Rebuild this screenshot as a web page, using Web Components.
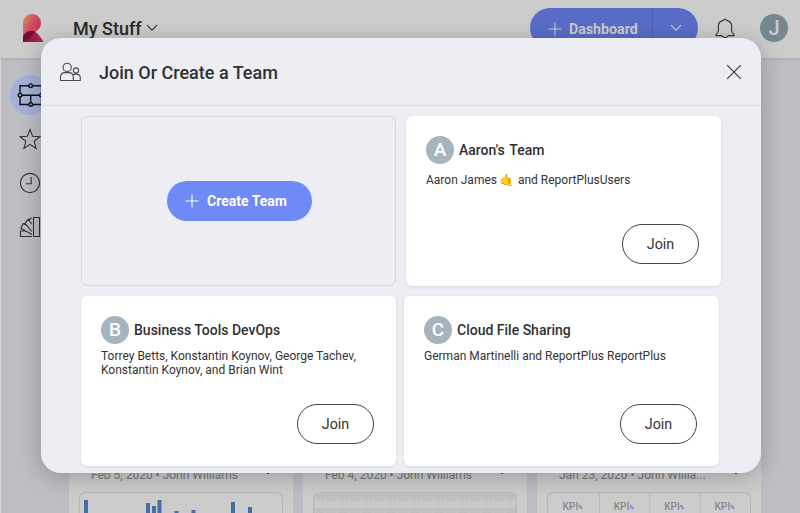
<!DOCTYPE html>
<html lang="en">
<head>
<meta charset="utf-8">
<title>Join Or Create a Team</title>
<style>
html,body{margin:0;padding:0;width:800px;height:513px;overflow:hidden}
body{font-family:Roboto,"Liberation Sans",sans-serif;color:#2f3033;position:relative;background:#bdbec4}
</style>
</head>
<body>
<team-app></team-app>
<script>
const define=(name,html)=>customElements.define(name,class extends HTMLElement{
  connectedCallback(){
    if(this.shadowRoot)return;
    const t=document.createElement('template');
    t.innerHTML=typeof html==='function'?html(this):html;
    this.attachShadow({mode:'open'}).append(t.content.cloneNode(true));
  }
});

const icons={
  plus:['0 0 14 14','<path d="M7 .5v13M.5 7h13"/>'],
  chevron:['0 0 12 8','<path d="M1 1.2 6 6.2 11 1.2"/>'],
  close:['0 0 16 16','<path d="M1.2 1.2 14.8 14.8M14.8 1.2 1.2 14.8"/>'],
  bell:['0 0 20 21','<path d="M10 1c.8 0 1.2.5 1.2 1.100C14.300 2.800 16.600 5 16.600 8v4.800c0 1.500.8 2.200 2.300 3.500v1.300h-5.200c-1.100 0-1.300 1.900-3.700 1.900s-2.600-1.900-3.700-1.900H1.100v-1.300c1.500-1.300 2.300-2 2.300-3.500V8c0-3 2.300-5.200 5.400-5.900C8.800 1.500 9.200 1 10 1Z"/>'],
  people:['0 0 22 20','<circle cx="8.200" cy="5.400" r="4.100"/><path d="M1.500 18.500v-3.300c0-2.700 1.900-4.600 4.600-4.600h3.600c2.700 0 4.600 1.900 4.600 4.600v3.300Z"/><circle cx="17" cy="8.500" r="2.600"/><path d="M14 13.200c.8-.9 1.600-1.100 3-1.100 2.600 0 4.300 1.500 4.300 3.800v2.600h-7"/>'],
  board:['0 0 26 24','<path d="M3 2.700h21.500V21.500H3ZM3 12.200h21.500M13.700 12.200v9.300" stroke-width="1.400"/><g fill="#a2b1d6" stroke-width="1.400"><circle cx="13.700" cy="2.700" r="1.800"/><circle cx="3" cy="12.200" r="1.800"/><circle cx="24.500" cy="12.200" r="1.800"/><circle cx="13.700" cy="21.500" r="1.800"/></g>'],
  star:['0 0 22 22','<path d="m11 1.500 2.600 6.800 7.300.4-5.700 4.600 1.900 7.100L11 16.400l-6.100 4 1.900-7.100L1.100 8.700l7.300-.4Z"/>'],
  clock:['0 0 22 22','<circle cx="11" cy="11" r="9.600"/><path d="M12.200 5v6.800H7"/>'],
  swatch:['0 0 22 22','<path d="M14.500 1.500h6v19h-6ZM13 20.500H1.500v-5.500h5.500M13 18.600 1.700 12.200 4.200 7.500 9.500 10.500M12.800 15.500 6 7.300 9.200 3.200l3.600 5M10 3.500l2.800-1.500"/>']
};
define('ui-icon',e=>{
  const [box,body]=icons[e.getAttribute('name')];
  return `<style>:host{display:block;flex:none}svg{display:block;width:100%;height:100%;overflow:visible}</style>
  <svg viewBox="${box}" fill="none" stroke="currentColor" stroke-width="${e.getAttribute('weight')||1.1}">${body}</svg>`;
});

define('letter-avatar',`<style>:host{display:flex;flex:none;align-items:center;justify-content:center;width:28px;height:28px;border-radius:50%;background:#a6b4bd;color:#fff;font-size:19px;font-weight:500;line-height:28px}</style><slot></slot>`);

define('pill-button',`<style>
:host{display:flex;align-items:center;justify-content:center;box-sizing:border-box;height:40px;border-radius:20px;font-size:14px;line-height:20px}
:host([kind=primary]){background:#6f89f7;color:#fff;font-weight:700;width:145px;padding-right:7px}
:host([kind=outline]){background:#fff;border:1px solid #444;color:#333;width:77px;font-weight:400;font-size:14.300px}
</style><slot name="icon"></slot><slot></slot>`);

define('team-card',`<style>
:host{display:flex;flex-direction:column;box-sizing:border-box;width:315px;height:170px;padding:20px 22px 22px 20px;border-radius:6px;background:#fff;box-shadow:0 1px 3px rgba(60,65,90,.12)}
.head{display:flex;align-items:center;gap:5px;height:28px;font-size:14px;font-weight:500;white-space:pre}
:host([single]) .head{word-spacing:1.500px}
.people{font-size:12px;line-height:14px;height:28px;margin-top:5px;display:flex;flex-direction:column;white-space:pre;color:#333}
:host([single]) .people{padding-top:4px}
.foot{display:flex;justify-content:flex-end;margin-top:auto}
</style>
<div class="head"><slot name="avatar"></slot><slot name="name"></slot></div>
<div class="people"><slot></slot></div>
<div class="foot"><pill-button kind="outline">Join</pill-button></div>`);

define('create-card',`<style>
:host{display:flex;align-items:center;justify-content:center;box-sizing:border-box;width:315px;height:170px;border:1px solid #d7d9de;border-radius:6px;padding-left:2px}
ui-icon{width:14px;height:14px;margin-right:8px}
</style><pill-button kind="primary"><ui-icon slot="icon" name="plus"></ui-icon>Create Team</pill-button>`);

define('team-dialog',`<style>
:host{position:absolute;left:41px;top:38px;width:720px;height:435px;display:flex;flex-direction:column;border-radius:20px;background:#edeef4;box-shadow:0 4px 22px rgba(0,0,0,.24);overflow:hidden}
header{display:flex;align-items:center;box-sizing:border-box;height:68px;padding:3px 19px 0 18px;border-bottom:1px solid #d7d9df;flex:none}
.people{width:22px;height:20px;color:#46484d;margin-top:-2px}
h1{margin:0 auto 0 18px;font-size:18px;line-height:24px;font-weight:500;color:#303134}
.close{width:16px;height:16px;color:#333;margin-top:-2px}
main{display:flex;flex-direction:column;gap:10px;padding:10px 40px 0}
.row{display:flex;gap:10px}.row+.row{gap:8px}
</style>
<header><ui-icon class="people" name="people"></ui-icon><h1>Join Or Create a Team</h1><ui-icon class="close" name="close"></ui-icon></header>
<main>
<div class="row"><create-card></create-card>
<team-card single><letter-avatar slot="avatar">A</letter-avatar><span slot="name">Aaron's Team</span><span>Aaron James <span style="margin:0 1px 0 -1px">🤙</span> and ReportPlusUsers</span></team-card></div>
<div class="row"><team-card><letter-avatar slot="avatar">B</letter-avatar><span slot="name">Business Tools DevOps</span><span>Torrey Betts, Konstantin Koynov, George Tachev,</span><span>Konstantin Koynov, and Brian Wint</span></team-card>
<team-card><letter-avatar slot="avatar">C</letter-avatar><span slot="name">Cloud File Sharing</span><span>German Martinelli and ReportPlus ReportPlus</span></team-card></div>
</main>`);

define('brand-mark',`<style>:host{display:block;width:20px;height:28px}svg{display:block}</style>
<svg width="20" height="28" viewBox="0 0 20 28"><defs><linearGradient id="a" x1="0" y1="0" x2="1" y2=".8"><stop stop-color="#d59660"/><stop offset=".5" stop-color="#cf4a62"/><stop offset="1" stop-color="#bd2d5c"/></linearGradient><linearGradient id="b"><stop stop-color="#861238"/><stop offset="1" stop-color="#b52b52"/></linearGradient></defs>
<path d="M0 27V9C0 4 4 0 9 0c5 0 9 4 9 9 0 3.500-1.800 6.200-4.500 8L0 27Z" fill="url(#a)"/>
<path d="M0 28v-5c1.500-4 5-6 8-6 4.500 0 7 2.600 9 5.500l3 4.300c.4.700 0 1.200-.8 1.200Z" fill="url(#b)"/><path d="M0 28v-5c1.500-4 5-6 8-6 1.700 0 3 .3 4.200 1C9 20.500 6.500 24.500 0 28Z" fill="#710c31"/></svg>`);

define('top-bar',`<style>
:host{display:flex;align-items:center;box-sizing:border-box;width:800px;height:58px;padding:0 12px 2px 23px;background:#ccc;box-shadow:0 1px 2px rgba(0,0,0,.12);position:relative}
.title{margin-left:30px;padding-top:2px;font-size:18px;line-height:24px;font-weight:500;color:#292929}
.arrow{width:12px;height:8px;margin:0 auto 0 4px;color:#333}
.new{display:flex;width:168px;height:40px;border-radius:20px;background:#596dc8;color:#ccc;font-size:14.200px;font-weight:700;margin-right:17px;box-sizing:border-box}
.main{display:flex;align-items:center;width:123px;padding-left:18px;box-sizing:border-box;border-right:1px solid #4b5cb0;gap:7px;padding-top:1px}
.more{display:flex;flex:1;align-items:center;justify-content:center}
.plus{width:14px;height:14px}.small{width:12px;height:8px}
.bell{width:20px;height:21px;margin-right:25px;color:#333}
letter-avatar{background:#758791;color:#ccc;font-size:20px}
</style>
<brand-mark></brand-mark><span class="title">My Stuff</span><ui-icon class="arrow" name="chevron"></ui-icon>
<div class="new"><div class="main"><ui-icon class="plus" name="plus"></ui-icon><span>Dashboard</span></div><div class="more"><ui-icon class="small" name="chevron"></ui-icon></div></div>
<ui-icon class="bell" name="bell"></ui-icon><letter-avatar>J</letter-avatar>`);

define('side-bar',`<style>
:host{display:flex;flex-direction:column;align-items:center;gap:4px;width:40px;padding:17px 0 0 10px;flex:none;color:#333}
div{display:flex;align-items:center;justify-content:center;width:40px;height:40px;border-radius:50%}
.on{background:#a2b1d6;color:#111}
ui-icon{width:22px;height:22px}.on ui-icon{width:26px;height:24px}
</style><div class="on"><ui-icon name="board"></ui-icon></div><div><ui-icon name="star"></ui-icon></div><div><ui-icon name="clock"></ui-icon></div><div><ui-icon name="swatch"></ui-icon></div>`);

define('board-tile',`<style>
:host{display:flex;flex-direction:column;justify-content:flex-end;box-sizing:border-box;width:224px;height:447px;padding:0 10px;background:#ccc;color:#777;font-size:12px}
.meta{display:flex;justify-content:space-between;height:16px;line-height:16px;padding:0 14px 0 12px;margin-bottom:9px}
.dots{width:2px;height:2px;background:#444;margin-top:5px}
.preview{box-sizing:border-box;height:21px;border:1px solid #b6b6b6;border-bottom:0;border-radius:6px 6px 0 0;overflow:hidden}
</style><div class="meta"><slot name="meta"></slot><i class="dots"></i></div><div class="preview"><slot></slot></div>`);

define('bar-preview',`<style>:host,svg{display:block}</style><svg width="202" height="21" fill="#446fa5">
<path d="M4 7h4v14h-4zM66 10h4v11h-4zM72 13h4v8h-4zM77.500 7h4v14h-4zM94.500 18h4v3h-4zM111.500 17h4v4h-4zM151 9h4v12h-4zM168 14h4v7h-4z"/></svg>`);
define('table-preview',`<style>:host,svg{display:block}</style><svg width="202" height="21"><defs><pattern id="g" width="24" height="14" patternUnits="userSpaceOnUse" y="1"><path d="M0 0h24v7H0z" fill="#c0c0c0"/><path d="M0 7h24v7H0z" fill="#c9c9c9"/><path d="M11.500 0v14M23.500 0v14" stroke="#cacaca"/></pattern></defs><rect width="202" height="21" fill="url(#g)"/></svg>`);
define('kpi-preview',`<style>:host{display:grid;grid-template-columns:repeat(4,1fr);height:20px}
div{display:flex;justify-content:center;align-items:center;padding-top:7px;padding-right:1px;font-size:10px;line-height:14px;font-weight:500;color:#888}div+div{border-left:1px solid #bcbcbc}small{font-size:6px;font-weight:700;color:#596dc8}
</style>`+'<div>KPI<small>%</small></div>'.repeat(4));

define('team-app',`<style>
:host{display:flex;flex-direction:column;width:800px;height:513px;background:#bdbec4;overflow:hidden;position:relative;box-shadow:inset 1px 0 #d5d5d7}
.body{display:flex;height:455px}
.tiles{display:flex;gap:10px;padding:8px 0 0 19px}
</style>
<top-bar></top-bar>
<div class="body"><side-bar></side-bar><div class="tiles">
<board-tile><span slot="meta">Feb 5, 2020 • John Williams</span><bar-preview></bar-preview></board-tile>
<board-tile><span slot="meta">Feb 4, 2020 • John Williams</span><table-preview></table-preview></board-tile>
<board-tile><span slot="meta">Jan 23, 2020 • John Willia...</span><kpi-preview></kpi-preview></board-tile>
</div></div>
<team-dialog></team-dialog>`);
</script>
</body>
</html>
